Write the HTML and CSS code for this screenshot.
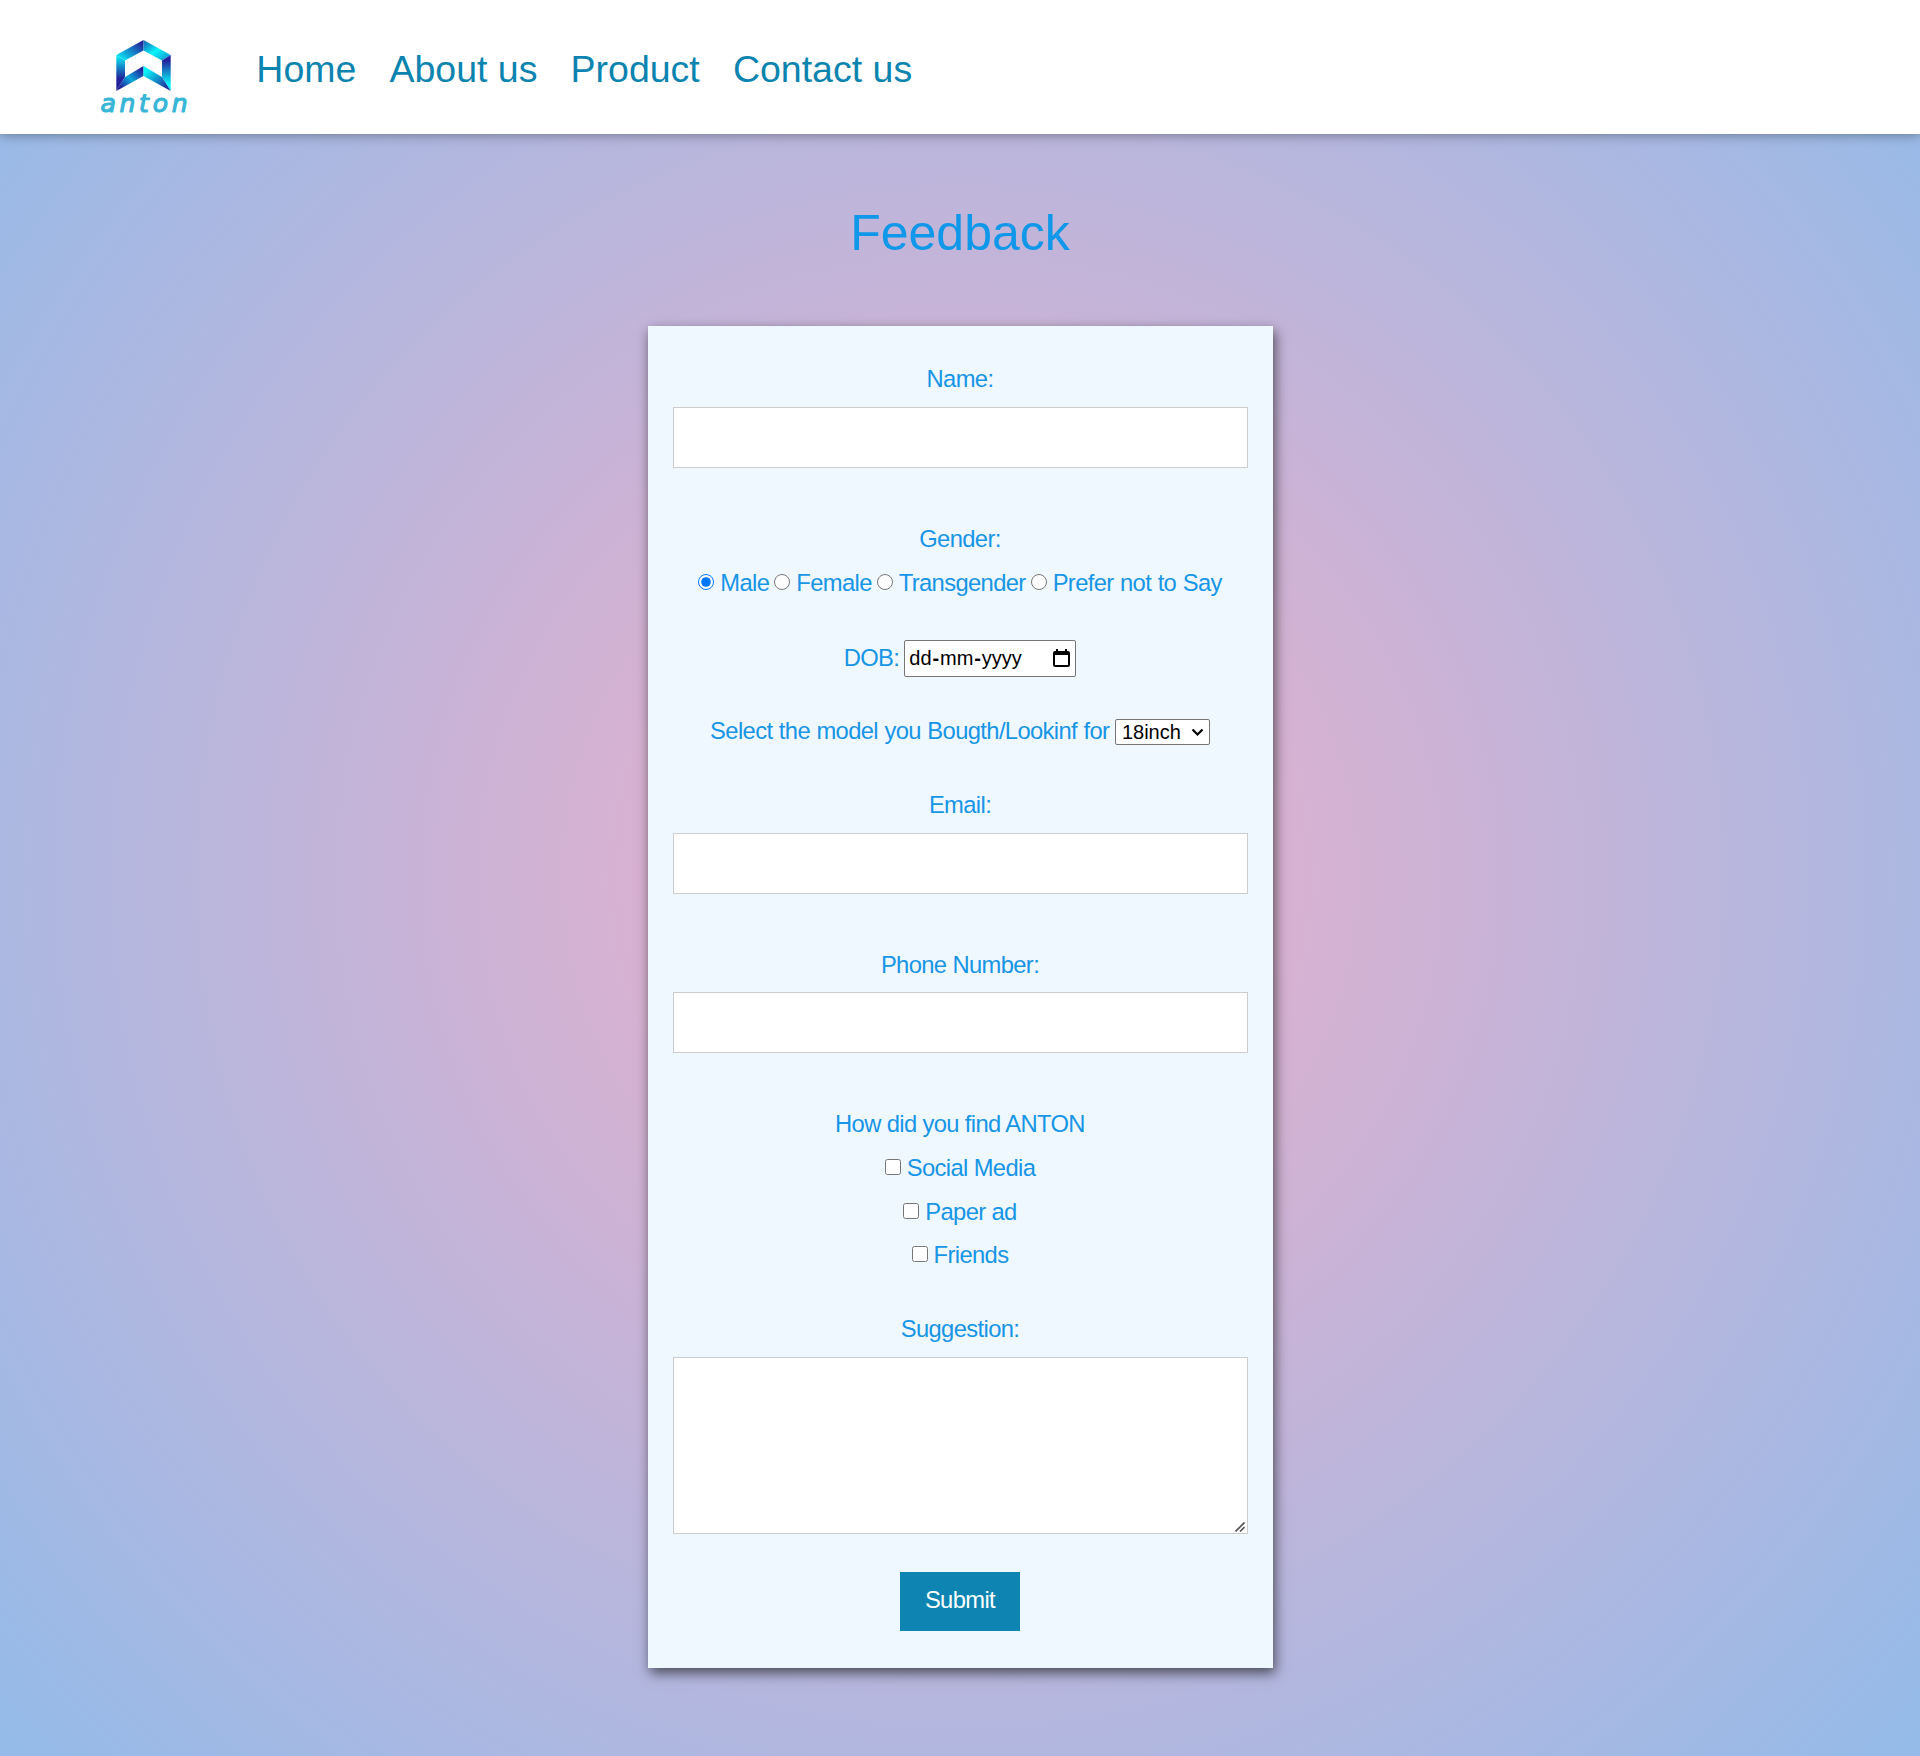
FILE: index.html
```html
<!DOCTYPE html>
<html lang="en">
<head>
<meta charset="utf-8">
<title>Feedback</title>
<link rel="stylesheet" href="styles.css">
</head>
<body>
<header class="header">
  <svg class="logo" viewBox="0 0 100 82" width="100" height="82" aria-label="anton">
    <defs>
      <linearGradient id="rise" x1="0" y1="1" x2="1" y2="0"><stop offset=".1" stop-color="#09e9f7"/><stop offset=".9" stop-color="#22229b"/></linearGradient>
      <linearGradient id="fall" x1="0" y1="0" x2="1" y2="1"><stop offset=".15" stop-color="#05f5fa"/><stop offset=".85" stop-color="#20319f"/></linearGradient>
      <linearGradient id="roof" x1="0" y1="0" x2="1" y2="1"><stop offset=".1" stop-color="#1878c0"/><stop offset=".5" stop-color="#05f5fa"/><stop offset="1" stop-color="#1683c6"/></linearGradient>
      <linearGradient id="left" x1="0" y1="0" x2="0" y2="1"><stop offset="0" stop-color="#05f5fa"/><stop offset=".65" stop-color="#22229b"/></linearGradient>
      <linearGradient id="right" x1="0" y1="0" x2="0" y2="1"><stop offset=".15" stop-color="#22229b"/><stop offset=".8" stop-color="#05f5fa"/></linearGradient>
      <linearGradient id="foot" x1="0" y1="1" x2="1" y2="0"><stop offset=".15" stop-color="#22229b"/><stop offset=".5" stop-color="#0aa9dc"/><stop offset=".9" stop-color="#22229b"/></linearGradient>
    </defs>
    <path fill="url(#rise)" d="M21.3 20 48.500 5V15.500L30 25.500Z"/>
    <path fill="url(#roof)" d="M48.500 5 75.700 20 67 25.500 48.500 15.500Z"/>
    <path fill="url(#left)" d="M21.300 20 30 25.500V42L21.300 56Z"/>
    <path fill="url(#right)" d="M75.700 20 67 25.500V42L75.700 56Z"/>
    <path fill="url(#foot)" d="M21.300 56 30 42 48.500 31V41Z"/>
    <path fill="url(#fall)" d="M48.500 31 67 42 75.700 56 48.500 41Z"/>
    <text x="5.500" y="77" class="logo-name" textLength="87">anton</text>
  </svg>
  <nav class="nav"><a>Home</a><a>About us</a><a>Product</a><a>Contact us</a></nav>
</header>
<main>
  <h1 class="title">Feedback</h1>
  <form class="card">
    <label class="line" for="name">Name:</label>
    <input class="field" id="name" type="text">
    <div class="line gender">Gender:</div>
    <div class="line choices">
      <label class="choice"><input type="radio" name="gender" checked>Male</label>
      <label class="choice"><input type="radio" name="gender">Female</label>
      <label class="choice"><input type="radio" name="gender">Transgender</label>
      <label class="choice"><input type="radio" name="gender">Prefer not to Say</label>
    </div>
    <div class="line inline dob">DOB:
      <span class="date"><span>dd</span><i>-</i><span>mm</span><i>-</i><span>yyyy</span>
        <svg class="calendar" width="17" height="18" viewBox="0 0 17 18"><path fill="#000" fill-rule="evenodd" d="M3 0h2v2h7V0h2v2h1a2 2 0 0 1 2 2v12a2 2 0 0 1-2 2H2a2 2 0 0 1-2-2V4a2 2 0 0 1 2-2h1ZM2 6v10h13V6Z"/></svg>
      </span>
    </div>
    <div class="line inline model">Select the model you Bougth/Lookinf for
      <span class="select"><span>18inch</span><svg width="13" height="9" viewBox="0 0 13 9"><path d="m1.500 1.500 5 5 5-5" fill="none" stroke="#000" stroke-width="2.200"/></svg></span>
    </div>
    <label class="line email" for="email">Email:</label>
    <input class="field" id="email" type="text">
    <label class="line phone" for="phone">Phone Number:</label>
    <input class="field phone-field" id="phone" type="text">
    <div class="line found">How did you find ANTON</div>
    <label class="line check"><input type="checkbox">Social Media</label>
    <label class="line check"><input type="checkbox">Paper ad</label>
    <label class="line check"><input type="checkbox">Friends</label>
    <label class="line suggestion" for="suggestion">Suggestion:</label>
    <div class="area-wrap">
      <textarea class="field area" id="suggestion"></textarea>
      <svg class="grip" width="10" height="10" viewBox="0 0 10 10"><path d="M.5 9.500 9.500.5M5 9.500 9.500 5" fill="none" stroke="#555" stroke-width="1.700"/></svg>
    </div>
    <button class="submit" type="button">Submit</button>
  </form>
</main>
</body>
</html>
```
FILE: styles.css
```css
* { box-sizing: border-box; }
body {
  margin: 0;
  min-height: 1756px;
  font-family: "Liberation Sans", Arial, sans-serif;
  background: radial-gradient(circle, rgb(238,174,202) 0%, rgb(148,187,233) 100%);
}
.header {
  display: flex;
  height: 134px;
  padding-left: 95px;
  background: #fff;
  box-shadow: 0 0 12px rgba(0,0,0,.42);
}
.logo { flex: none; margin-top: 35px; }
.logo-name { font: italic 25px "DejaVu Sans", sans-serif; fill: #38b6d8; stroke: #38b6d8; stroke-width: 1.2px; stroke-linejoin: round; }
.nav {
  display: flex;
  gap: 33.1px;
  margin-left: 61.3px;
  padding-top: 47px;
  font-size: 37.5px;
  line-height: 44px;
  color: #0c84b0;
}
.title {
  margin: 70px 0 64px;
  text-align: center;
  font-size: 50px;
  line-height: 58px;
  font-weight: 400;
  color: #0f98e9;
}
.card {
  display: flex;
  flex-direction: column;
  width: 625px;
  height: 1342px;
  margin: 0 auto;
  padding: 31px 25px;
  background: #f0f8ff;
  box-shadow: 2px 5px 12px rgba(0,0,0,.6);
  font-size: 23.75px;
  letter-spacing: -.625px;
  color: #1795e6;
}
.line { display: block; height: 44px; line-height: 44px; text-align: center; white-space: nowrap; }
.field {
  display: block;
  width: 100%;
  height: 61px;
  margin: 6px 0 0;
  border: 1px solid #ccc;
  border-radius: 0;
  background: #fff;
}
.gender { margin-top: 49px; }
.choices { display: flex; justify-content: center; gap: 5px; word-spacing: .5px; }
.choice { display: flex; align-items: center; gap: 6px; }
.choice input, .check input { width: 16px; height: 16px; margin: 0; }
.choice input { margin-bottom: 2px; }
.inline { display: flex; justify-content: center; align-items: center; gap: 5.5px; word-spacing: .5px; }
.dob { margin-top: 31px; gap: 5px; }
.date {
  display: flex;
  align-items: center;
  width: 172px;
  height: 37px;
  padding: 0 5px 0 4px;
  border: 1px solid #767676;
  border-radius: 2px;
  background: #fff;
  color: #000;
  font-size: 20px;
  letter-spacing: 0;
}
.date i { width: 8.5px; text-align: center; font-style: normal; font-weight: 700; }
.calendar { margin-left: auto; }
.model { margin-top: 29px; }
.select {
  display: flex;
  align-items: center;
  justify-content: space-between;
  width: 95px;
  height: 26px;
  margin-top: 2px;
  padding: 0 5px 0 6px;
  border: 1px solid #767676;
  border-radius: 2px;
  background: #fff;
  color: #000;
  font-size: 20px;
  letter-spacing: 0;
}
.email { margin-top: 30px; }
.phone { margin-top: 49px; }
.phone-field { margin-top: 5px; }
.found { margin-top: 49px; }
.check { display: flex; justify-content: center; align-items: center; gap: 6px; height: 43.6px; line-height: 43.6px; }
.check input { margin-bottom: 1px; }
.suggestion { margin-top: 30.2px; }
.area-wrap { position: relative; }
.area { height: 177px; resize: none; }
.grip { position: absolute; right: 3px; bottom: 2px; }
.submit {
  align-self: center;
  width: 120px;
  height: 59px;
  margin-top: 38px;
  padding: 0 0 3px;
  border: 0;
  background: #0d84b1;
  color: #fff;
  font: 23.75px "Liberation Sans", Arial, sans-serif;
  letter-spacing: -.625px;
}
```
